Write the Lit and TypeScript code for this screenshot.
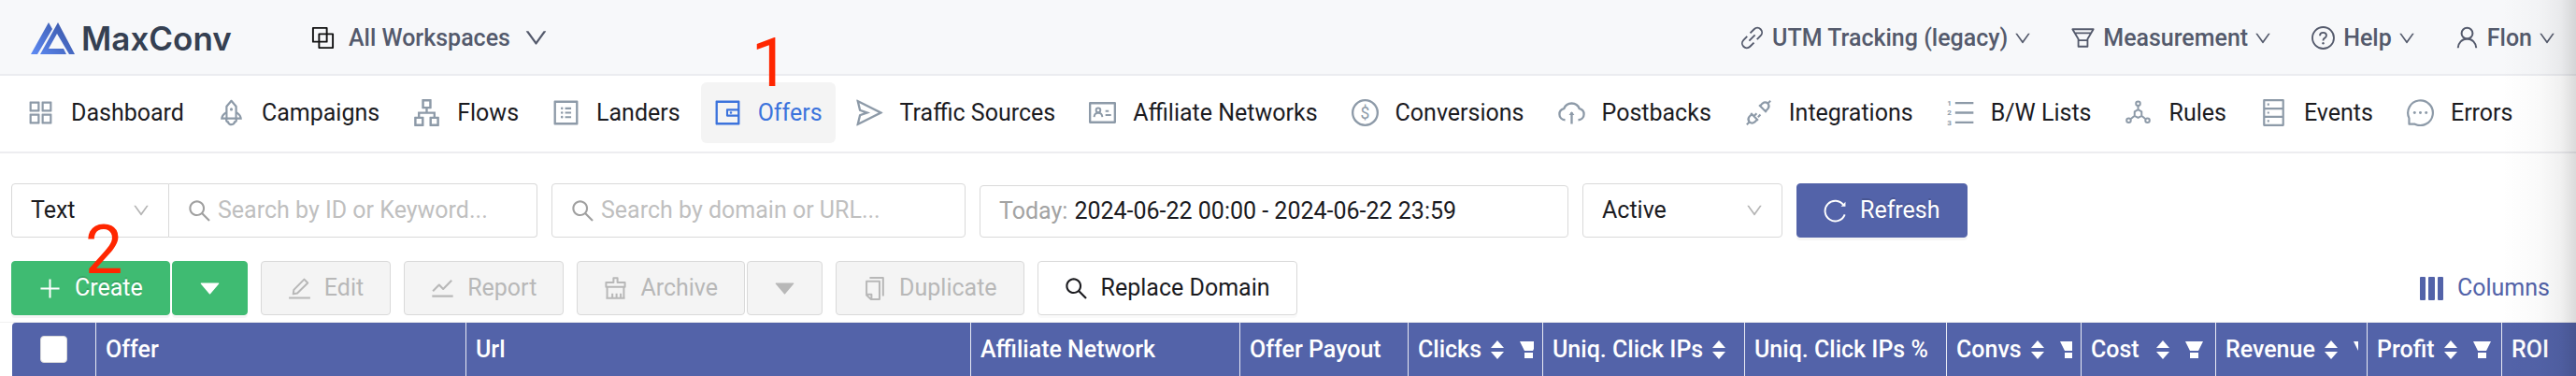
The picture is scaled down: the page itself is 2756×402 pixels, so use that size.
import { LitElement, html, svg, css, nothing, TemplateResult } from "lit";
import { customElement } from "lit/decorators.js";
import { classMap } from "lit/directives/class-map.js";

/* Outline icons on the 1024 grid, cropped to the 896 live area. */
const line = (content: unknown, width = 68) =>
  svg`<g fill="none" stroke="currentColor" stroke-width=${width} stroke-linejoin="round">${content}</g>`;

const icons: Record<string, unknown> = {
  dashboard: svg`<path d="M464 144H160c-8.800 0-16 7.200-16 16v304c0 8.800 7.200 16 16 16h304c8.800 0 16-7.200 16-16V160c0-8.800-7.200-16-16-16zm-52 268H212V212h200v200zm452-268H560c-8.800 0-16 7.200-16 16v304c0 8.800 7.200 16 16 16h304c8.800 0 16-7.200 16-16V160c0-8.800-7.200-16-16-16zm-52 268H612V212h200v200zM464 544H160c-8.800 0-16 7.200-16 16v304c0 8.800 7.200 16 16 16h304c8.800 0 16-7.200 16-16V560c0-8.800-7.200-16-16-16zm-52 268H212V612h200v200zm452-268H560c-8.800 0-16 7.200-16 16v304c0 8.800 7.200 16 16 16h304c8.800 0 16-7.200 16-16V560c0-8.800-7.200-16-16-16zm-52 268H612V612h200v200z"/>`,
  rocket: svg`<path d="M864 736c0-111.600-65.400-208-160-252.900V317.300c0-15.100-5.300-29.700-15.100-41.200L536.500 95.400C530.100 87.800 521 84 512 84s-18.100 3.800-24.500 11.400L335.100 276.100a63.970 63.970 0 00-15.100 41.200v165.800C225.400 528 160 624.400 160 736h156.500c-2.300 7.200-3.500 15-3.500 23.800 0 22.100 7.600 43.700 21.400 60.800a97.200 97.200 0 0043.100 30.600c23.100 54 75.600 88.800 134.500 88.800 29.100 0 57.300-8.600 81.400-24.800 23.600-15.800 41.900-37.900 53-64a97 97 0 0043.100-30.500 97.520 97.520 0 0021.400-60.800c0-8.400-1.100-16.400-3.100-23.800H864zM762.300 621.400c9.400 14.600 17 30.300 22.500 46.600H700V558.700a211.600 211.600 0 0162.300 62.700zM388 483.100V318.800l124-147 124 147V668H388V483.100zM239.200 668c5.500-16.300 13.100-32 22.500-46.600 16.300-25.200 37.500-46.500 62.300-62.700V668h-84.800zm388.900 116.200c-5.200 3-11.200 4.200-17.100 3.400l-19.500-2.400-2.800 19.400c-5.400 37.900-38.400 66.500-76.700 66.500-38.300 0-71.300-28.600-76.700-66.500l-2.800-19.500-19.500 2.500a27.700 27.700 0 01-17.100-3.500c-8.700-5-14.100-14.300-14.100-24.400 0-10.600 5.900-19.400 14.600-23.800h231.300c8.800 4.500 14.600 13.300 14.600 23.800-.1 10.200-5.500 19.600-14.200 24.500zM464 400a48 48 0 1096 0 48 48 0 10-96 0z"/>`,
  flows: svg`<path d="M908 640H804V488c0-4.400-3.600-8-8-8H548v-96h108c8.800 0 16-7.200 16-16V80c0-8.800-7.200-16-16-16H368c-8.800 0-16 7.200-16 16v288c0 8.800 7.200 16 16 16h108v96H228c-4.400 0-8 3.600-8 8v152H116c-8.800 0-16 7.200-16 16v288c0 8.800 7.200 16 16 16h288c8.800 0 16-7.200 16-16V656c0-8.800-7.200-16-16-16H292v-88h440v88H620c-8.800 0-16 7.200-16 16v288c0 8.800 7.200 16 16 16h288c8.800 0 16-7.200 16-16V656c0-8.800-7.200-16-16-16zm-564 76v168H176V716h168zm84-408V140h168v168H428zm420 576H680V716h168v168z"/>`,
  landers: svg`<path d="M880 112H144c-17.700 0-32 14.300-32 32v736c0 17.700 14.300 32 32 32h736c17.700 0 32-14.300 32-32V144c0-17.700-14.300-32-32-32zm-40 728H184V184h656v656zM484 336h200v64H484zM484 480h200v64H484zM484 624h200v64H484zM340 368a40 40 0 1080 0 40 40 0 10-80 0zm0 144a40 40 0 1080 0 40 40 0 10-80 0zm0 144a40 40 0 1080 0 40 40 0 10-80 0z"/>`,
  wallet: svg`<path d="M880 112H144c-17.700 0-32 14.300-32 32v736c0 17.700 14.300 32 32 32h736c17.700 0 32-14.300 32-32V144c0-17.700-14.300-32-32-32zm-40 464H528V448h312v128zm0 264H184V184h656v200H496c-17.700 0-32 14.300-32 32v192c0 17.700 14.300 32 32 32h344v200zM580 512a40 40 0 1080 0 40 40 0 10-80 0z"/>`,
  send: svg`<path d="M931.400 498.900L94.900 79.500c-3.400-1.700-7.300-2.100-11-1.200a15.990 15.990 0 00-11.700 19.300l86.200 352.200c1.300 5.300 5.200 9.600 10.400 11.300l147.700 50.700-147.600 50.700c-5.200 1.800-9.100 6-10.300 11.300L72.200 926.500c-.9 3.700-.5 7.600 1.200 10.900 3.900 7.900 13.500 11.100 21.500 7.200l836.500-417c3.100-1.500 5.600-4.100 7.200-7.100 3.900-8 .7-17.600-7.200-21.600zM170.800 826.300l50.300-205.600 295.200-101.300c2.300-.8 4.200-2.600 5-5 1.400-4.200-.8-8.700-5-10.200L221.100 403 171 198.200l628 314.900-628.200 313.200z"/>`,
  idcard: line(svg`<path d="M100 196H924V828H100Z"/><circle cx="372" cy="430" r="72" stroke-width="60"/><path d="M236 654c6-76 62-134 136-134s130 58 136 134M610 460h110M610 590h188" stroke-width="60"/>`, 72),
  dollar: svg`${line(svg`<circle cx="512" cy="512" r="412"/>`, 72)}<text x="512" y="702" font-size="540" text-anchor="middle">$</text>`,
  cloud: line(svg`<path d="M296 752C190 746 108 670 108 566c0-92 62-166 148-186 40-106 138-178 256-178s216 72 256 178c86 20 148 94 148 186 0 104-82 180-188 186M512 880V500" /><path d="M420 590L512 474l92 116Z" fill="currentColor" stroke="none"/>`, 72),
  api: line(svg`<path d="M560 286L640 206a140 140 0 01178 0 140 140 0 010 178L738 464ZM464 738L384 818a140 140 0 01-178 0 140 140 0 010-178L286 560ZM806 218L904 120M218 806L120 904M448 532l-80 80M492 656l80-80M530 256L768 494M256 530L494 768" stroke-width="66"/>`),
  ordered: svg`${line(svg`<path d="M336 192H940M336 512H940M336 832H940"/>`, 72)}<g font-size="250" font-weight="700"><text x="70" y="282">1</text><text x="70" y="602">2</text><text x="70" y="922">3</text></g>`,
  rules: line(svg`<path d="M512 408l116 66v140l-116 66-116-66V474ZM512 280V408M396 614L276 712M628 614l120 98"/><circle cx="512" cy="212" r="70"/><circle cx="202" cy="770" r="70"/><circle cx="822" cy="770" r="70"/>`, 62),
  hdd: line(svg`<path d="M196 100H828V924H196ZM196 375H828M196 649H828"/><path d="M304 238h64M304 512h64M304 786h64"/>`, 68),
  message: svg`${line(svg`<path d="M140 888V694A412 412 0 11330 888Z"/>`, 68)}<circle cx="320" cy="512" r="46"/><circle cx="512" cy="512" r="46"/><circle cx="704" cy="512" r="46"/>`,
  blocks: line(svg`<path d="M132 132H660V660H132ZM364 364H892V892H364Z"/>`, 68),
  down: svg`<path d="M884 256h-75c-5.100 0-9.900 2.500-12.900 6.600L512 654.200 227.900 262.600c-3-4.100-7.800-6.600-12.900-6.600h-75c-6.500 0-10.300 7.400-6.500 12.700l352.600 486.100c12.800 17.600 39 17.600 51.700 0l352.600-486.100c3.900-5.300.1-12.700-6.400-12.700z"/>`,
  link: line(svg`<path d="M440 330L590 180a176 176 0 01250 250L700 574M584 694L434 844a176 176 0 01-250-250L324 450M400 624L624 400"/>`, 66),
  funnel: line(svg`<path d="M112 182H912L688 560V842H336V560ZM190 330H834M336 606H688"/>`, 66),
  question: svg`${line(svg`<circle cx="512" cy="512" r="412"/><path d="M388 430c0-70 54-118 124-118s124 48 124 112c0 92-124 92-124 176v20"/>`, 66)}<circle cx="512" cy="718" r="42"/>`,
  user: line(svg`<circle cx="512" cy="338" r="212"/><path d="M162 900c6-196 158-350 350-350s344 154 350 350"/>`, 72),
  search: svg`<path d="M909.600 854.500L649.900 594.800C690.200 542.700 712 479 712 412c0-80.200-31.300-155.400-87.900-212.100-56.600-56.700-132-87.900-212.100-87.900s-155.500 31.300-212.100 87.900C143.200 256.500 112 331.800 112 412c0 80.100 31.300 155.500 87.900 212.100C256.500 680.800 331.800 712 412 712c67 0 130.600-21.800 182.700-62l259.700 259.600a8.200 8.200 0 0011.600 0l43.600-43.500a8.200 8.200 0 000-11.600zM570.400 570.400C528 612.700 471.800 636 412 636s-116-23.300-158.400-65.600C211.300 528 188 471.800 188 412s23.300-116.100 65.600-158.400C296 211.300 352.200 188 412 188s116.100 23.200 158.400 65.600S636 352.200 636 412s-23.300 116.100-65.600 158.400z"/>`,
  reload: line(svg`<path d="M876 650A390 390 0 11830 290"/><path d="M730 340H904V160Z" fill="currentColor" stroke="none"/>`, 70),
  plus: line(svg`<path d="M512 152V872M152 512H872"/>`, 72),
  caret: svg`<path d="M840.400 300H183.600c-19.700 0-30.700 20.800-18.500 35l328.400 380.800c9.400 10.900 27.500 10.900 37 0L858.900 335c12.200-14.200 1.200-35-18.500-35z"/>`,
  edit: line(svg`<path d="M104 874H920M268 720l24-160L690 158l136 136L424 694Z"/>`, 72),
  report: line(svg`<path d="M112 804H912M140 610L380 370 536 526 860 200"/>`, 76),
  archive: line(svg`<path d="M150 446V276H436V106h152V276H874V446ZM192 446V878H832V446M392 878V700M552 878V700M712 878V700M150 878H874"/>`, 72),
  duplicate: line(svg`<path d="M252 230H708V924H380L210 760V230ZM210 740H400V924M330 100H846V800"/>`, 72),
};

const icon = (name: string, cls = "") =>
  html`<svg class="icon ${cls}" viewBox="64 64 896 896" fill="currentColor" aria-hidden="true">${icons[name]}</svg>`;

const navItems = [
  ["Dashboard", "dashboard"],
  ["Campaigns", "rocket"],
  ["Flows", "flows"],
  ["Landers", "landers"],
  ["Offers", "wallet"],
  ["Traffic Sources", "send"],
  ["Affiliate Networks", "idcard"],
  ["Conversions", "dollar"],
  ["Postbacks", "cloud"],
  ["Integrations", "api"],
  ["B/W Lists", "ordered"],
  ["Rules", "rules"],
  ["Events", "hdd"],
  ["Errors", "message"],
];

const accountItems = [
  ["UTM Tracking (legacy)", "link"],
  ["Measurement", "funnel"],
  ["Help", "question"],
  ["Flon", "user"],
];

interface Column {
  label: string;
  cls: string;
  sort?: boolean;
  filter?: boolean;
}

const columns: Column[] = [
  { label: "Offer", cls: "w-offer" },
  { label: "Url", cls: "w-url" },
  { label: "Affiliate Network", cls: "w-network" },
  { label: "Offer Payout", cls: "w-payout" },
  { label: "Clicks", cls: "w-metric", sort: true, filter: true },
  { label: "Uniq. Click IPs", cls: "w-wide", sort: true },
  { label: "Uniq. Click IPs %", cls: "w-wide" },
  { label: "Convs", cls: "w-metric", sort: true, filter: true },
  { label: "Cost", cls: "w-metric", sort: true, filter: true },
  { label: "Revenue", cls: "w-revenue", sort: true, filter: true },
  { label: "Profit", cls: "w-metric", sort: true, filter: true },
  { label: "ROI", cls: "w-rest" },
];

@customElement("app-root")
export class AppRoot extends LitElement {
  static styles = css`
    :host {
      display: block;
      position: relative;
      overflow: hidden;
      background: #fff;
      color: #1b1b1f;
      font: 25px/40px Roboto, "Liberation Sans", sans-serif;
    }
    *, *::before { box-sizing: border-box; }
    button, input, select { font: inherit; color: inherit; margin: 0; }
    a { color: inherit; text-decoration: none; }
    .icon { width: 25px; height: 25px; flex: none; display: block; }
    .icon.large { width: 29px; height: 29px; }
    .icon.small { width: 18px; height: 18px; }

    .header {
      display: flex;
      align-items: center;
      height: 81px;
      padding: 2px 22px 0 33px;
      background: #f7f8fa;
      border-bottom: 2px solid #ebecf0;
      color: #545a6c;
      font-weight: 500;
    }
    .brand {
      display: flex;
      align-items: center;
      gap: 6px;
      width: 300px;
      color: #354052;
      font: 600 35px/40px Inter, "Open Sans", sans-serif;
    }
    .logo { width: 48px; height: 34px; display: block; }
    .menu {
      display: flex;
      align-items: center;
      gap: 7px;
      padding: 0;
      border: 0;
      background: none;
    }
    .workspace { gap: 15px; }
    .workspace .icon:first-child { color: #111; }
    .account { display: flex; gap: 43px; margin-left: auto; }
    .account .menu .icon:first-child { margin-right: 2px; }

    .nav {
      display: flex;
      gap: 8px;
      padding: 7px 15px 9px;
      border-bottom: 2px solid #ededf0;
    }
    .nav-item {
      display: flex;
      align-items: center;
      gap: 18px;
      height: 65px;
      padding: 0 14px;
      border-radius: 6px;
      white-space: nowrap;
      position: relative;
    }
    .nav-item .icon { color: #8d9aa8; }
    .nav-item.active { background: #f4f4f4; color: #3c73dc; }
    .nav-item.active .icon { color: inherit; }

    .step {
      position: absolute;
      z-index: 2;
      color: #ff2600;
      font: 400 72px/72px Roboto, sans-serif;
      text-shadow: none;
      pointer-events: none;
    }
    .step.one { left: 54px; top: -56px; }
    .step.two { left: 79px; top: -47px; }

    .page { padding-top: 32px; }
    .filters { display: flex; align-items: flex-end; padding: 0 12px; gap: 15px; }
    .box {
      display: flex;
      align-items: center;
      height: 58px;
      border: 1px solid #d9d9d9;
      border-radius: 4px;
      background: #fff;
    }
    .group { display: flex; }
    .group .box:first-child { border-radius: 4px 0 0 4px; }
    .group .box:last-child { border-radius: 0 4px 4px 0; border-left: 0; }
    .select { display: grid; align-items: center; }
    .select select, .select .icon { grid-area: 1 / 1; }
    .select select {
      width: 100%;
      height: 56px;
      padding: 0 20px;
      border: 0;
      background: none;
      appearance: none;
      outline: none;
    }
    .select .icon { justify-self: end; margin-right: 20px; color: #b4b4b4; pointer-events: none; }
    .select.kind { width: 169px; }
    .select.status { width: 214px; }
    .search { gap: 7px; padding: 0 20px; color: #a0a0a0; }
    .search input { flex: 1; min-width: 0; padding: 0; border: 0; outline: none; background: none; color: #1b1b1f; }
    .search input::placeholder { color: #bfbfbf; opacity: 1; }
    .search.keyword { width: 394px; }
    .search.domain { width: 443px; }
    .range { width: 630px; height: 56px; padding: 0 20px; gap: 7px; text-align: left; }
    .muted { color: #a3a3a3; }

    .actions { display: flex; align-items: center; gap: 14px; padding: 25px 28px 7px 12px; }
    .split { display: flex; gap: 2px; position: relative; }
    .btn {
      display: flex;
      align-items: center;
      justify-content: center;
      gap: 14px;
      height: 58px;
      padding: 0 28px;
      border: 1px solid #d9d9d9;
      border-radius: 4px;
      background: #fff;
      white-space: nowrap;
    }
    .btn.drop { width: 81px; padding: 0; }
    .btn.primary, .btn.green {
      color: #fff;
      box-shadow: 0 3px 0 rgba(0, 0, 0, 0.04);
      text-shadow: 0 -2px 0 rgba(0, 0, 0, 0.12);
    }
    .btn.primary { background: #5363a9; border-color: #5363a9; }
    .btn.green { background: #3fbb72; border-color: #3fbb72; }
    .btn.raised { box-shadow: 0 3px 0 rgba(0, 0, 0, 0.02); }
    .btn:disabled { background: #f4f4f4; color: #b8b8b8; }
    .columns-link {
      display: flex;
      align-items: center;
      gap: 15px;
      margin-left: auto;
      padding: 0;
      border: 0;
      background: none;
      color: #5363a9;
    }
    .bars { width: 25px; height: 25px; display: block; }

    .table-wrap { padding-left: 13px; border-top: 1px solid #f0f0f0; }
    table { width: 100%; table-layout: fixed; border-collapse: separate; border-spacing: 0; }
    th {
      height: 57px;
      padding: 0 9px 0 10px;
      background: #5363a9;
      color: #fff;
      border-right: 1px solid #e8eaf4;
      font-weight: 500;
      text-align: left;
    }
    th:first-child { border-top-left-radius: 4px; padding: 0 0 0 30px; }
    th:last-child { border-right: 0; }
    .cell { display: flex; align-items: center; overflow: hidden; white-space: nowrap; }
    .sort { width: 14px; height: 20px; flex: none; margin: 0 17px 0 10px; display: block; }
    .filter { width: 19px; height: 20px; flex: none; margin-right: 4px; display: block; }
    .cell.sized .title { flex: 1 0 auto; }
    .check {
      display: block;
      appearance: none;
      width: 29px;
      height: 29px;
      margin: 0;
      border: 1px solid #d9d9d9;
      border-radius: 4px;
      background: #fff;
    }
    .w-check { width: 90px; }
    .w-offer { width: 396px; }
    .w-url { width: 540px; }
    .w-network { width: 288px; }
    .w-payout { width: 180px; }
    .w-metric { width: 144px; }
    .w-wide { width: 216px; }
    .w-revenue { width: 162px; }

    .edge {
      position: absolute;
      inset: 0 0 0 auto;
      width: 80px;
      background: linear-gradient(to right, rgba(0, 0, 0, 0), rgba(0, 0, 0, 0.02) 50%, rgba(0, 0, 0, 0.06) 80%, rgba(0, 0, 0, 0.14));
      pointer-events: none;
      z-index: 3;
    }
  `;

  private select(label: string, value: string, cls: string): TemplateResult {
    return html`<div class="box select ${cls}">
      <select aria-label=${label}><option>${value}</option></select>
      ${icon("down", "small")}
    </div>`;
  }

  private search(placeholder: string, cls: string): TemplateResult {
    return html`<label class="box search ${cls}">
      ${icon("search")}<input type="text" aria-label=${placeholder} placeholder=${placeholder} />
    </label>`;
  }

  private action(label: string, name: string): TemplateResult {
    return html`<button class="btn" disabled>${icon(name)}<span>${label}</span></button>`;
  }

  private heading(c: Column): TemplateResult {
    return html`<th scope="col">
      <div class=${classMap({ cell: true, sized: !!c.filter })}>
        <span class="title">${c.label}</span>
        ${c.sort
          ? html`<svg class="sort" viewBox="0 0 14 20" fill="currentColor" aria-hidden="true"><path d="M7 0L14 8H0ZM7 20L0 12H14Z" /></svg>`
          : nothing}
        ${c.filter
          ? html`<svg class="filter" viewBox="0 0 19 20" fill="currentColor" aria-hidden="true"><path d="M0 1H19L14 11H5ZM5 13H14V19H5Z" /></svg>`
          : nothing}
      </div>
    </th>`;
  }

  render() {
    return html`
      <header class="header">
        <a class="brand" href="#">
          <svg class="logo" viewBox="0 0 48 34" aria-hidden="true">
            <defs>
              <linearGradient id="blue" x1="0" y1="1" x2="1" y2="0.300">
                <stop offset="0" stop-color="#5e8bf5" />
                <stop offset="1" stop-color="#3a57a8" />
              </linearGradient>
            </defs>
            <path fill="url(#blue)" d="M19 0L23 7 7 34H0ZM29 0L47 34H41L28 12 19 28H35L38 34H10Z" />
          </svg>
          <span>MaxConv</span>
        </a>
        <button class="menu workspace">
          ${icon("blocks")}<span>All Workspaces</span>${icon("down")}
        </button>
        <div class="account">
          ${accountItems.map(
            ([label, name]) =>
              html`<button class="menu">${icon(name)}<span>${label}</span>${icon("down", "small")}</button>`
          )}
        </div>
      </header>

      <nav class="nav">
        ${navItems.map(
          ([label, name]) => html`<a href="#" class=${classMap({ "nav-item": true, active: label === "Offers" })}>
            ${icon(name, "large")}<span>${label}</span>
            ${label === "Offers" ? html`<span class="step one">1</span>` : nothing}
          </a>`
        )}
      </nav>

      <main class="page">
        <div class="filters">
          <div class="group">
            ${this.select("Search type", "Text", "kind")} ${this.search("Search by ID or Keyword...", "keyword")}
          </div>
          ${this.search("Search by domain or URL...", "domain")}
          <button class="box range">
            <span class="muted">Today:</span><span>2024-06-22 00:00 - 2024-06-22 23:59</span>
          </button>
          ${this.select("Status", "Active", "status")}
          <button class="btn primary">${icon("reload")}<span>Refresh</span></button>
        </div>

        <div class="actions">
          <div class="split">
            <button class="btn green">${icon("plus")}<span>Create</span></button>
            <button class="btn green drop" aria-label="More create options">${icon("caret")}</button>
            <span class="step two">2</span>
          </div>
          ${this.action("Edit", "edit")} ${this.action("Report", "report")}
          <div class="split">
            ${this.action("Archive", "archive")}
            <button class="btn drop" disabled aria-label="More archive options">${icon("caret")}</button>
          </div>
          ${this.action("Duplicate", "duplicate")}
          <button class="btn raised">${icon("search")}<span>Replace Domain</span></button>
          <button class="columns-link">
            <svg class="bars" viewBox="0 0 25 25" fill="currentColor" aria-hidden="true">
              <rect width="6" height="25" rx="1" /><rect x="9" width="7" height="25" rx="1" /><rect x="19" width="6" height="25" rx="1" />
            </svg>
            <span>Columns</span>
          </button>
        </div>

        <div class="table-wrap">
          <table>
            <colgroup>
              <col class="w-check" />
              ${columns.map((c) => html`<col class=${c.cls} />`)}
            </colgroup>
            <thead>
              <tr>
                <th scope="col"><input class="check" type="checkbox" aria-label="Select all offers" /></th>
                ${columns.map((c) => this.heading(c))}
              </tr>
            </thead>
          </table>
        </div>
      </main>
      <div class="edge"></div>
    `;
  }
}
